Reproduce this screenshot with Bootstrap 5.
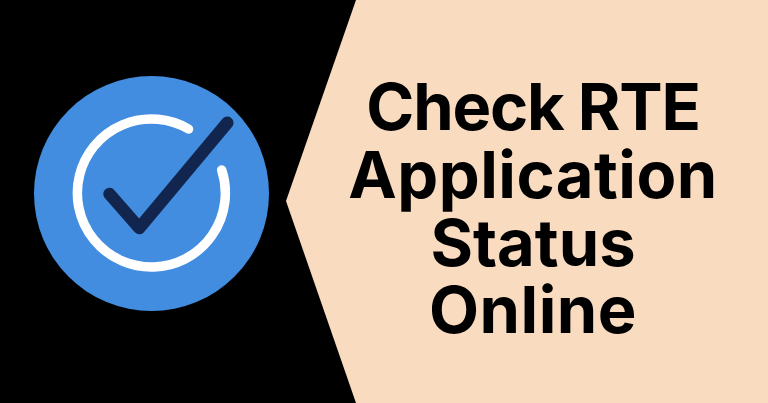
<!DOCTYPE html>
<html><head><meta charset="utf-8">
<link href="https://cdn.jsdelivr.net/npm/bootstrap@5.3.0/dist/css/bootstrap.min.css" rel="stylesheet">
<style>
html,body{margin:0;height:403px;overflow:hidden;background:#000}
.banner{width:768px;height:403px;background:#000}
.badge-wrap{width:286px;height:403px;flex:none}
.title-wrap{width:482px;height:403px;flex:none;background:#f9dbc0;padding-left:12px;padding-top:14px;clip-path:polygon(70px 0,100% 0,100% 100%,70px 100%,0 201px)}
.title-text{font-family:Inter,"Liberation Sans",sans-serif;font-weight:700;font-size:65px;line-height:67.6px;color:#000;text-align:center;margin:0}
.title-line{display:block}
.line-tight{letter-spacing:-1.2px}
.line-wide{letter-spacing:.5px}
</style></head><body>
<div class="banner d-flex">
<div class="badge-wrap">
<svg width="286" height="403" viewBox="0 0 286 403" class="d-block">
<circle cx="151.5" cy="193.5" r="117.5" fill="#428de0"/>
<path d="M188.5 129A74 74 0 1 0 221.7 170" fill="none" stroke="#fff" stroke-width="9.5" stroke-linecap="round"/>
<path d="M109.5 194L139.3 228L227.3 122.7" fill="none" stroke="#11254f" stroke-width="12.5" stroke-linecap="round" stroke-linejoin="round"/>
</svg></div>
<div class="title-wrap d-flex align-items-center justify-content-center">
<h1 class="title-text"><span class="title-line line-tight">Check RTE</span><span class="title-line line-wide">Application</span><span class="title-line">Status</span><span class="title-line line-wide">Online</span></h1>
</div></div>
</body></html>
